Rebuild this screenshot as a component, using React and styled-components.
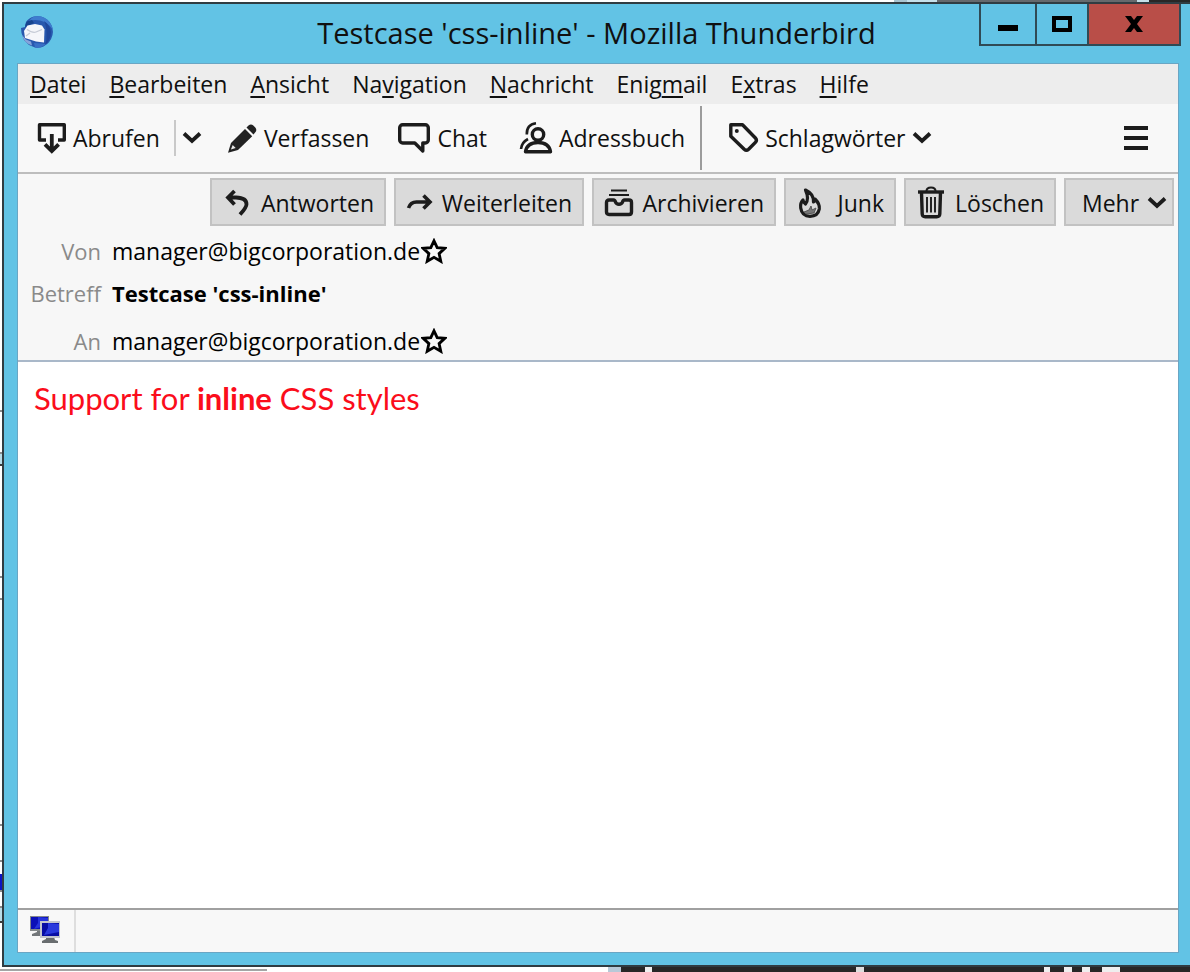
import React from "react";
import styled, { createGlobalStyle, css } from "styled-components";

const GlobalStyle = createGlobalStyle`
  * { box-sizing: border-box; }
  body {
    margin: 0;
    background: #fff;
    color: #101010;
    font-family: "Open Sans", "Noto Sans", sans-serif;
    font-size: 23px;
    line-height: 32px;
  }
  button { font: inherit; color: inherit; border: 0; background: none; padding: 0; margin: 0; }
  svg { display: block; flex: none; }
`;

/* ---------- desktop behind the window ---------- */

const Desktop = styled.div`
  display: grid;
  grid-template: 2px 1fr 5px / 2px minmax(0, 1fr);
  min-height: 100vh;
`;

const TopStrip = styled.div`
  grid-column: 1 / -1;
  display: flex;
  background: #fff;
`;

const BottomStrip = styled(TopStrip)``;

const Segment = styled.div`
  flex: ${(p) => p.$grow || 0} 0 ${(p) => p.$width || 0}px;
  background: ${(p) => p.$color};
  ${(p) => p.$line && css`border-top: 2px solid #fff; border-bottom: 1px solid #fff;`}
`;

const LeftStrip = styled.div`
  display: flex;
  flex-direction: column;
  justify-content: flex-end;
  background: #fff;
`;

const Sliver = styled.div`
  height: ${(p) => p.$height}px;
  background: ${(p) => p.$color || "#fff"};
  border-top: 2px solid ${(p) => p.$edge || "#8a8a8a"};
`;

/* ---------- window frame ---------- */

const Window = styled.main`
  display: flex;
  flex-direction: column;
  min-width: 0;
  background: #62c3e5;
  border: solid #303c42;
  border-width: 2px 0 2px 2px;
`;

const TitleBar = styled.header`
  display: grid;
  grid-template-columns: 1fr auto 1fr;
  height: 60px;
  padding: 0 9px 0 16px;
`;

const AppBadge = styled.div`
  padding-top: 11px;
`;

const Title = styled.h1`
  margin: 0;
  padding: 9px 8px 0 0;
  font-size: 29px;
  line-height: 40px;
  font-weight: 400;
  white-space: nowrap;
`;

const WindowControls = styled.div`
  display: flex;
  justify-self: end;
  align-self: start;
  height: 42px;
  border: solid #304a55;
  border-width: 0 2px 2px;
`;

const ControlButton = styled.button`
  display: flex;
  align-items: center;
  justify-content: center;
  width: ${(p) => p.$width}px;
  background: ${(p) => (p.$danger ? "#b94e48" : "transparent")};
  & + & { border-left: 2px solid #304a55; }
`;

const Client = styled.div`
  flex: 1;
  display: flex;
  flex-direction: column;
  margin: 0 12px 13px 14px;
  background: #fff;
  outline: 1px solid #6aa6c4;
`;

/* ---------- menu and toolbar ---------- */

const MenuBar = styled.nav`
  display: flex;
  align-items: center;
  gap: 23px;
  height: 40px;
  padding: 0 12px;
  background: #ededed;
`;

const MenuButton = styled.button`
  white-space: nowrap;
  u {
    text-decoration-thickness: 2px;
    text-underline-offset: 3px;
    text-decoration-skip-ink: none;
  }
`;

const Toolbar = styled.div`
  display: flex;
  align-items: center;
  height: 70px;
  padding: 0 30px 0 19px;
  background: #f8f8f8;
  border-bottom: 2px solid #bdbdbd;
`;

const ToolButton = styled.button`
  display: flex;
  align-items: center;
  gap: 6px;
  margin-right: ${(p) => p.$after || 0}px;
  white-space: nowrap;
`;

const Divider = styled.span`
  width: 2px;
  height: ${(p) => (p.$tall ? 64 : 36)}px;
  margin-right: ${(p) => (p.$tall ? 26 : 6)}px;
  background: ${(p) => (p.$tall ? "#9c9c9c" : "#c9c9c9")};
`;

const MenuToggle = styled.button`
  margin-left: auto;
`;

/* ---------- message header ---------- */

const MessageHeader = styled.section`
  padding: 4px 4px 0 12px;
  background: #f7f7f7;
  border-bottom: 2px solid #a9b8c9;
`;

const Actions = styled.div`
  display: flex;
  justify-content: flex-end;
  gap: 8px;
`;

const ActionButton = styled.button`
  display: flex;
  align-items: center;
  justify-content: space-between;
  min-width: ${(p) => p.$width}px;
  height: 48px;
  padding: 2px ${(p) => (p.$menu ? 5 : 10)}px 0 ${(p) => (p.$menu ? 16 : 10)}px;
  background: #dadada;
  border: 2px solid #c2c2c2;
  white-space: nowrap;
`;

const Fields = styled.dl`
  margin: 0;
  padding-top: 6px;
`;

const Field = styled.div`
  display: grid;
  grid-template-columns: 71px 1fr;
  column-gap: 11px;
  align-items: center;
  height: 38px;
  margin-top: ${(p) => p.$before || 0}px;
`;

const FieldName = styled.dt`
  color: #8a8a8a;
  font-size: 22px;
  text-align: right;
`;

const FieldValue = styled.dd`
  display: flex;
  align-items: center;
  gap: 1px;
  margin: 0;
  color: #000;
  font-size: ${(p) => (p.$bold ? 22 : 23)}px;
  font-weight: ${(p) => (p.$bold ? 700 : 400)};
  white-space: nowrap;
`;

/* ---------- body and status ---------- */

const Body = styled.article`
  flex: 1;
  padding: 16px;
  color: #fb0d1b;
  font-family: Lato, "Open Sans", sans-serif;
  font-size: 31px;
  line-height: 40px;
  p { margin: 0; }
`;

const StatusBar = styled.footer`
  display: flex;
  height: 44px;
  background: #f8f8f8;
  border-top: 2px solid #a0a0a0;
`;

const StatusCell = styled.div`
  display: flex;
  align-items: center;
  width: 58px;
  padding: 0 0 2px 12px;
  border-right: 2px solid #dedede;
`;

/* ---------- icons ---------- */

const Icon = ({ w, h, sw = 3.4, children }) => (
  <svg width={w} height={h} viewBox={`0 0 ${w} ${h}`} fill="none" stroke="#1c1c1c"
    strokeWidth={sw} strokeLinejoin="round" aria-hidden="true">{children}</svg>
);

const Thunderbird = () => (
  <svg width="34" height="34" viewBox="0 0 34 34" aria-hidden="true">
    <path d="M14 1.500Q24 0 29.500 7q4.500 6 3 13-2 8-9 11.500-4 2-8.500 1L9 30 4 25 1.500 18 1 13l4-1 1-5q3-4.500 8-5.500Z" fill="#2858ae" />
    <path d="M14 1.500Q24 0 29.500 7q3 4 3.500 8-5-8-13-9.500Q14 4.500 9 6q2-3.500 5-4.500Z" fill="#3f7ccf" />
    <path d="M24 6q6 4 7 11 0 8-6 13 2-5 1.500-11Q26.500 11 24 6Z" fill="#1f479c" />
    <path d="M7 6.500 12 5l2 3-6 3-3 1q0-3 2-5.500Z" fill="#17458f" />
    <path d="M4 16 7.500 10.500 15 9l7 1.500 2.500 4-.5 13-8-1-11-3.500Z" fill="#f5f6fa" />
    <path d="M7 14.500q6 4 9 2.500l6-2.500M10 18l-4 3" fill="none" stroke="#c6cbd6" strokeWidth="1.300" />
    <path d="m2 20 4 4.500 5 2 1 4Q4 28 2 20Z" fill="#86a3da" />
    <path d="m14 28 8 .5 4 1q-6 4-11 3Z" fill="#3970c6" />
  </svg>
);

const Fetch = () => (
  <Icon w={30} h={32}>
    <path d="M9 18H2.500V2.700H27.300V18H21" />
    <path d="M14.800 12V28M8 22.300l6.800 6.800 6.800-6.800" strokeWidth="3.800" strokeLinejoin="miter" />
  </Icon>
);

const Pencil = () => (
  <svg width="31" height="31" viewBox="0 0 31 31" aria-hidden="true">
    <path d="M1 29.800 4 20 18 6l7.200 7.200L11 27Z" fill="#222" />
    <path d="m19.500 4.500 2-2q2.500-2 4.800 0l2 2q2 2.400 0 4.800l-1.800 2.200Z" fill="#222" />
    <path d="m3.900 26.600 1.800-4.500 3 3Z" fill="#e8e8e8" />
  </svg>
);

const Chat = () => (
  <Icon w={34} h={32}>
    <path d="M5.700 2.700h22.600a3 3 0 0 1 3 3V18a3 3 0 0 1-3 3h-2.500v8l-8-8H5.700a3 3 0 0 1-3-3V5.700a3 3 0 0 1 3-3Z" />
  </Icon>
);

const Contacts = () => (
  <Icon w={34} h={34}>
    <circle cx="19" cy="13.500" r="5.700" />
    <path d="M6.500 30.800Q8 21.500 19 21.500t12.500 9.300Z" />
    <path d="M7.800 13.500Q7.500 3.500 17 2.300M2 28q.5-6.500 7-10" strokeWidth="2.600" />
  </Icon>
);

const Tag = () => (
  <Icon w={31} h={32}>
    <path d="M2.800 2.800h11.700L27.400 16q2 2.200 0 4.300l-6.800 7q-2.200 2-4.400 0L2.800 14.200Z" />
    <circle cx="8.800" cy="9" r="2" fill="#1c1c1c" stroke="none" />
  </Icon>
);

const Chevron = () => (
  <Icon w={20} h={14} sw={3.8}><path d="m2 2.500 8 7.500 8-7.500" strokeLinejoin="miter" /></Icon>
);

const Hamburger = () => (
  <Icon w={24} h={26} sw={4}><path d="M0 3h24M0 13h24M0 23h24" /></Icon>
);

const Reply = () => (
  <Icon w={30} h={30} sw={3.8}>
    <path d="M6 9.500h8q10.500.3 10.500 6.700 0 3.300-6.500 10.300M12.500 3 6 9.500 12.500 16.500" strokeLinejoin="miter" />
  </Icon>
);

const Forward = () => (
  <Icon w={27} h={30} sw={3.6}>
    <path d="M2.500 20q2-6 8-6H24M17.500 7.500 24 14l-6.500 6.500" strokeLinejoin="miter" />
  </Icon>
);

const Archive = () => (
  <Icon w={30} h={30}>
    <path d="M7 2.500h16M5 7h20" strokeWidth="2" />
    <path d="M5 12h4.500q1.500 0 2 2.200.8 2 3.500 2t3.500-2q.5-2.200 2-2.200H25q2.500 0 2.500 2.500V24q0 2.500-2.500 2.500H5Q2.500 26.500 2.500 24v-9.500Q2.500 12 5 12Z" />
  </Icon>
);

const Flame = () => (
  <Icon w={26} h={32} sw={3.2}>
    <path d="M9.500 3Q18 7 17.500 15q1.500-1 1.500-3 5 5 4.300 10-1.300 7.300-9.300 7.300T4.700 21Q4 16 7 13q.5 3 2.500 4 4-5 0-14Z" />
    <path d="m8 25 5-2 2-4 1 4 4-2-2 5-8 1Z" fill="#777" stroke="#555" strokeWidth="1" />
  </Icon>
);

const Trash = () => (
  <Icon w={28} h={34}>
    <path d="M2 6h26" />
    <path d="M10.500 5q0-3.500 4.500-3.500T19.500 5" strokeWidth="2" />
    <path d="M5.500 6.500 6.200 28q.2 2.800 3 2.800h11.600q2.800 0 3-2.800l.7-21.500" />
    <path d="M11 11v15.500M15 11v15.500M19 11v15.500" strokeWidth="1.900" />
  </Icon>
);

const Star = () => (
  <Icon w={26} h={26} sw={2.8}>
    <path d="m13 2.800 3.200 6.800 7.600.7-5.700 5.300 1.700 7.700-6.800-4-6.800 4 1.700-7.700-5.700-5.300 7.600-.7Z" strokeLinejoin="miter" stroke="#000" />
  </Icon>
);

const Network = () => (
  <svg width="32" height="30" viewBox="0 0 32 30" aria-hidden="true">
    <path d="M7 15h8l2 6H2v-2l5-2Z" fill="#73777a" />
    <path d="M0 1h19v15H0Z" fill="#85898b" />
    <path d="M1 2h17v12H1Z" fill="#0b10b8" />
    <path d="m8 2 10 1v7L4 14l4-6Z" fill="#2734dc" />
    <path d="M16 22h8l1 3 3 1v2H12v-2l4-2Z" fill="#696d6f" />
    <path d="M10 6h20v17H10Z" fill="#c2c5cd" />
    <path d="M12 8h17v13H12Z" fill="#070da4" />
    <path d="m18 8 11 1v8l-15 3 4-7Z" fill="#2939dd" />
  </svg>
);

/* ---------- content ---------- */

const menus = [
  ["", "D", "atei"], ["", "B", "earbeiten"], ["", "A", "nsicht"], ["Na", "v", "igation"],
  ["", "N", "achricht"], ["Enig", "m", "ail"], ["E", "x", "tras"], ["", "H", "ilfe"],
];

const actions = [
  ["Antworten", Reply, 176], ["Weiterleiten", Forward, 190], ["Archivieren", Archive, 184],
  ["Junk", Flame, 112], ["Löschen", Trash, 152],
];

const Address = ({ children }) => (
  <FieldValue>{children}<button aria-label="Zum Adressbuch hinzufügen"><Star /></button></FieldValue>
);

export default function App() {
  return (
    <>
      <GlobalStyle />
      <Desktop>
        <TopStrip>
          <Segment $grow={1} $color="#fff" />
          <Segment $width={13} $color="#a9c4d0" />
          <Segment $width={30} $color="#c5e0ea" />
          <Segment $width={200} $color="#65696d" />
          <Segment $width={12} $color="#c5e0ea" />
          <Segment $width={41} $color="#272727" />
        </TopStrip>
        <LeftStrip>
          <Sliver $height={42} />
          <Sliver $height={12} $color="#b9dce8" />
          <Sliver $height={112} $edge="#3a3a3a" />
          <Sliver $height={22} />
          <Sliver $height={226} />
          <Sliver $height={36} />
          <Sliver $height={14} />
          <Sliver $height={16} $color="#0d14c4" $edge="#0d14c4" />
          <Sliver $height={16} />
          <Sliver $height={15} $color="#b9dce8" />
          <Sliver $height={46} $edge="#3a3a3a" />
        </LeftStrip>
        <Window>
          <TitleBar>
            <AppBadge><Thunderbird /></AppBadge>
            <Title>Testcase 'css-inline' - Mozilla Thunderbird</Title>
            <WindowControls>
              <ControlButton $width={54} aria-label="Minimieren">
                <svg width="20" height="18" viewBox="0 0 20 18"><path d="M0 10h20v6H0Z" /></svg>
              </ControlButton>
              <ControlButton $width={52} aria-label="Maximieren">
                <svg width="20" height="16" viewBox="0 0 20 16"><path d="M2 2h16v12H2Z" fill="none" stroke="#000" strokeWidth="4" /></svg>
              </ControlButton>
              <ControlButton $width={92} $danger aria-label="Schließen">
                <svg width="20" height="16" viewBox="0 0 20 16"><path d="M1 0h6l3 4 3-4h6l-6 8 6 8h-6l-3-4-3 4H1l6-8Z" /></svg>
              </ControlButton>
            </WindowControls>
          </TitleBar>
          <Client>
            <MenuBar>
              {menus.map(([before, key, after]) => (
                <MenuButton key={after}>{before}<u>{key}</u>{after}</MenuButton>
              ))}
            </MenuBar>
            <Toolbar>
              <ToolButton $after={14}><Fetch />Abrufen</ToolButton>
              <Divider />
              <ToolButton $after={25} aria-label="Abrufoptionen"><Chevron /></ToolButton>
              <ToolButton $after={28}><Pencil />Verfassen</ToolButton>
              <ToolButton $after={32}><Chat />Chat</ToolButton>
              <ToolButton $after={15}><Contacts />Adressbuch</ToolButton>
              <Divider $tall />
              <ToolButton><Tag />Schlagwörter<Chevron /></ToolButton>
              <MenuToggle aria-label="Anwendungsmenü"><Hamburger /></MenuToggle>
            </Toolbar>
            <MessageHeader>
              <Actions>
                {actions.map(([label, Glyph, width]) => (
                  <ActionButton key={label} $width={width}><Glyph />{label}</ActionButton>
                ))}
                <ActionButton $menu $width={110}>Mehr<Chevron /></ActionButton>
              </Actions>
              <Fields>
                <Field><FieldName>Von</FieldName><Address>manager@bigcorporation.de</Address></Field>
                <Field $before={4}><FieldName>Betreff</FieldName><FieldValue $bold>Testcase 'css-inline'</FieldValue></Field>
                <Field $before={10}><FieldName>An</FieldName><Address>manager@bigcorporation.de</Address></Field>
              </Fields>
            </MessageHeader>
            <Body><p>Support for <b>inline</b> CSS styles</p></Body>
            <StatusBar><StatusCell><Network /></StatusCell></StatusBar>
          </Client>
        </Window>
        <BottomStrip>
          <Segment $width={267} $color="#a5a5a5" $line />
          <Segment $width={341} $color="#fff" />
          <Segment $width={13} $color="#b7c9d8" />
          <Segment $width={24} $color="#272727" />
          <Segment $width={7} $color="#eee" />
          <Segment $grow={1} $color="#272727" />
          <Segment $width={8} $color="#ddd" />
          <Segment $width={180} $color="#272727" />
          <Segment $width={6} $color="#eee" />
          <Segment $width={14} $color="#272727" />
          <Segment $width={8} $color="#eee" />
          <Segment $width={10} $color="#272727" />
          <Segment $width={8} $color="#eee" />
          <Segment $width={12} $color="#272727" />
          <Segment $width={18} $color="#eee" />
          <Segment $width={70} $color="#272727" />
        </BottomStrip>
      </Desktop>
    </>
  );
}
